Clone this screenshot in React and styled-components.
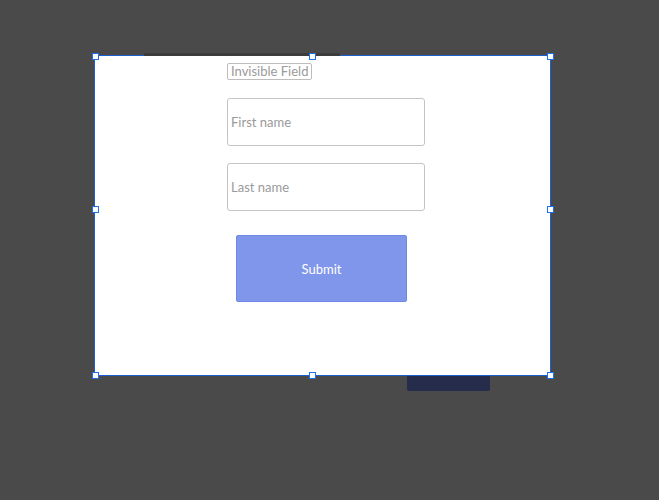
import React from "react";
import styled, { createGlobalStyle } from "styled-components";

const Global = createGlobalStyle`
    html, body {
        margin: 0;
        background: #4a4a4a;
        font-family: Lato, "Open Sans", sans-serif;
    }
`

// selection handles around the frame (px, relative to frame corner)
const handles = [
    [0, 0], [217, 0], [455, 0],
    [0, 153], [455, 153],
    [0, 319], [217, 319], [455, 319],
]

const App = () => {
    return (
        <>
            <Global />
            <Canvas>
                <Frame>
                    <BackStrip />
                    <FormColumn>
                        <HiddenField>Invisible Field</HiddenField>
                        <Field placeholder="First name" />
                        <Field placeholder="Last name" />
                        <SubmitButton>Submit</SubmitButton>
                    </FormColumn>
                    <FooterTab />
                    {
                        handles.map(([x, y], i) =>
                            <Handle key={i} $x={x} $y={y} />
                        )
                    }
                </Frame>
            </Canvas>
        </>
    )
}

export default App


const Canvas = styled.div`
    width: 659px;
    height: 500px;
    padding: 56px 0 0 95px;
    box-sizing: border-box;
`

const Frame = styled.div`
    position: relative;
    width: 455px;
    height: 319px;
    background: #ffffff;
    box-shadow: 0 0 0 1px #1c5fd0;
`

const BackStrip = styled.div`
    position: absolute;
    left: 49px;
    top: -3px;
    width: 196px;
    height: 3px;
    background: #3c3c3c;
`

const FooterTab = styled.div`
    position: absolute;
    left: 312px;
    top: 320px;
    width: 83px;
    height: 15px;
    background: #262c4b;
    border-radius: 0 0 2px 2px;
`

const FormColumn = styled.div`
    display: flex;
    flex-direction: column;
    align-items: flex-start;
    padding: 7px 0 0 132px;
`

const HiddenField = styled.div`
    box-sizing: border-box;
    height: 17px;
    padding: 0 3px;
    border: 1px solid #bdbdbd;
    border-radius: 2px;
    color: #9a9a9a;
    font-size: 13px;
    line-height: 15px;
`

const Field = styled.input`
    box-sizing: border-box;
    width: 198px;
    height: 48px;
    margin-top: 18px;
    padding: 0 3px;
    border: 1px solid #c4c4c4;
    border-radius: 3px;
    font-family: Lato, sans-serif;
    font-size: 13px;
    outline: none;

    & + & {
        margin-top: 17px;
    }

    &::placeholder {
        color: #9a9a9a;
    }
`

const SubmitButton = styled.button`
    width: 171px;
    height: 67px;
    margin: 24px 0 0 9px;
    background: #7f96ea;
    border: 1px solid #6f88e3;
    border-radius: 2px;
    color: #ffffff;
    font-family: Lato, sans-serif;
    font-size: 13px;
`

const Handle = styled.div`
    position: absolute;
    left: ${p => p.$x}px;
    top: ${p => p.$y}px;
    width: 5px;
    height: 5px;
    margin: -3px 0 0 -3px;
    background: #ffffff;
    border: 1px solid #1f6fe8;
`
